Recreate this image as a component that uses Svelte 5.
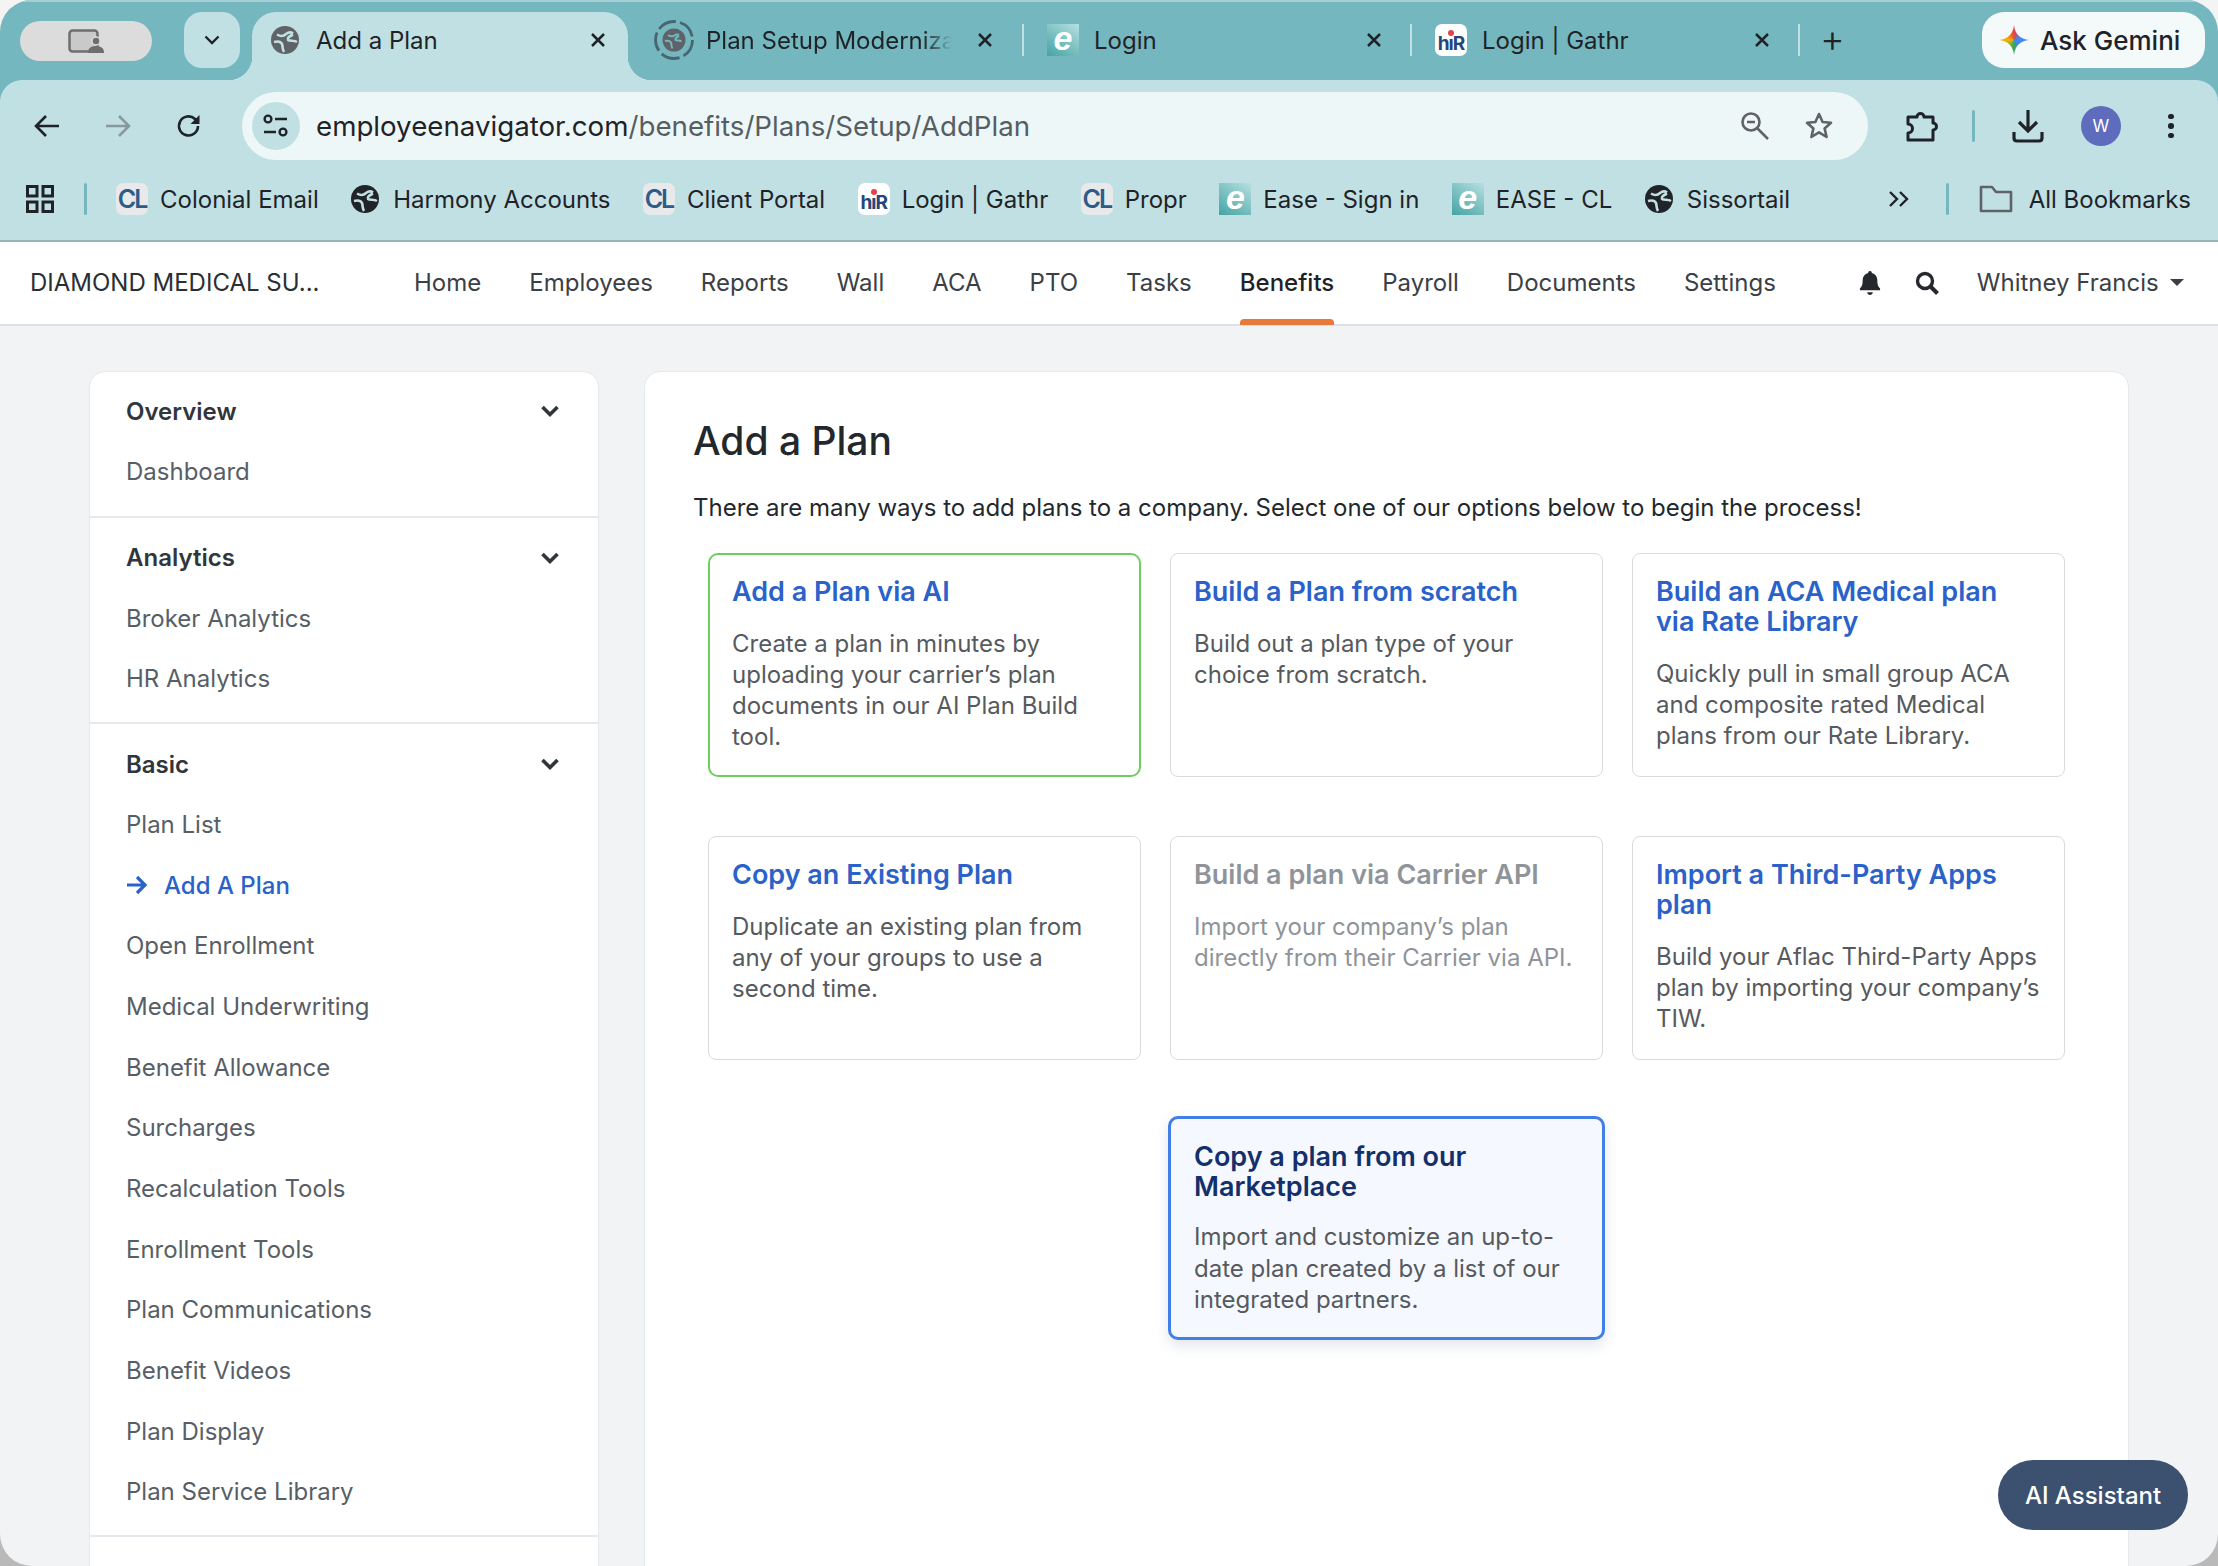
<script>
  let tabs = [
    { title: 'Plan Setup Moderniza', icon: 'spin', fade: true },
    { title: 'Login', icon: 'e' },
    { title: 'Login | Gathr', icon: 'hr' }
  ];

  let bookmarks = [
    { title: 'Colonial Email', icon: 'cl' },
    { title: 'Harmony Accounts', icon: 'globe' },
    { title: 'Client Portal', icon: 'cl' },
    { title: 'Login | Gathr', icon: 'hr' },
    { title: 'Propr', icon: 'cl' },
    { title: 'Ease - Sign in', icon: 'e' },
    { title: 'EASE - CL', icon: 'e' },
    { title: 'Sissortail', icon: 'globe' }
  ];

  let navItems = ['Home', 'Employees', 'Reports', 'Wall', 'ACA', 'PTO', 'Tasks', 'Benefits', 'Payroll', 'Documents', 'Settings'];

  let sideGroups = [
    { title: 'Overview', items: ['Dashboard'] },
    { title: 'Analytics', items: ['Broker Analytics', 'HR Analytics'] },
    {
      title: 'Basic',
      items: ['Plan List', 'Add A Plan', 'Open Enrollment', 'Medical Underwriting', 'Benefit Allowance', 'Surcharges', 'Recalculation Tools', 'Enrollment Tools', 'Plan Communications', 'Benefit Videos', 'Plan Display', 'Plan Service Library']
    }
  ];

  let cards = [
    { title: 'Add a Plan via AI', text: 'Create a plan in minutes by uploading your carrier’s plan documents in our AI Plan Build tool.', kind: 'ai' },
    { title: 'Build a Plan from scratch', text: 'Build out a plan type of your choice from scratch.' },
    { title: 'Build an ACA Medical plan via Rate Library', text: 'Quickly pull in small group ACA and composite rated Medical plans from our Rate Library.' },
    { title: 'Copy an Existing Plan', text: 'Duplicate an existing plan from any of your groups to use a second time.' },
    { title: 'Build a plan via Carrier API', text: 'Import your company’s plan directly from their Carrier via API.', kind: 'off' },
    { title: 'Import a Third-Party Apps plan', text: 'Build your Aflac Third-Party Apps plan by importing your company’s TIW.' },
    { title: 'Copy a plan from our Marketplace', text: 'Import and customize an up-to-date plan created by a list of our integrated partners.', kind: 'market' }
  ];
</script>

{#snippet globe(color, land)}
  <svg class="globe" viewBox="0 0 28 28">
    <circle cx="14" cy="14" r="14" fill={color} />
    <g fill="none" stroke={land} stroke-width="2.600">
      <path d="M6 8.500C10 11 13 10 15 8c2-1.500 5-2 7-.5" />
      <path d="M22 8.500c-4 2-6 3.500-5 5.500 2 1.500 6 0 9 2" />
      <path d="M3 16c4-1 7 0 8 2 1 3 0 5 2 8" />
    </g>
  </svg>
{/snippet}

{#snippet closeX()}
  <svg class="tab-x" viewBox="0 0 16 16" width="16" height="16"><path d="m2 2 12 12M14 2 2 14" fill="none" stroke="#1f2328" stroke-width="2.500" /></svg>
{/snippet}

{#snippet favicon(kind)}
  {#if kind === 'cl'}
    <span class="fav fav-cl">CL</span>
  {:else if kind === 'hr'}
    <span class="fav fav-hr">hıR<i></i></span>
  {:else if kind === 'e'}
    <span class="fav fav-e">e</span>
  {:else if kind === 'spin'}
    <svg class="spin" viewBox="0 0 40 40">
      <circle cx="20" cy="20" r="18.500" fill="none" stroke="#47666e" stroke-width="2.800" stroke-dasharray="19 4.200" />
      <circle cx="20" cy="20" r="11.500" fill="#5f6368" />
      <g fill="none" stroke="#74b7bf" stroke-width="2">
        <path d="M14 15c3 2 5 1.500 6.500.5 1.500-1 3-1.500 4.500-.5" />
        <path d="M25 16c-3 1.500-4 2.500-3.500 4 1.500 1 4 0 6 1.500" />
        <path d="M11 21c3-.7 5 0 6 1.500.7 2 0 4 1.500 6" />
      </g>
    </svg>
  {:else}
    {@render globe('#202428', '#c1e0e3')}
  {/if}
{/snippet}

<div class="window">
  <header class="chrome">
    <div class="tabstrip">
      <div class="profile-pill">
        <svg viewBox="0 0 36 24" width="36" height="24">
          <rect x="1.500" y="1.500" width="28" height="21" rx="3" fill="#c9c9c9" stroke="#6e6e6e" stroke-width="2.500" />
          <circle cx="28" cy="12" r="4" fill="#6e6e6e" stroke="#dcdcdc" stroke-width="1.500" />
          <path d="M20 24c0-5 3-7 8-7s8 2 8 7z" fill="#6e6e6e" />
        </svg>
      </div>
      <button class="tab-search" aria-label="Search tabs">
        <svg viewBox="0 0 16 10" width="16" height="10"><path d="M1.500 1.500 8 8l6.500-6.500" fill="none" stroke="#1f2328" stroke-width="2.400" /></svg>
      </button>
      <div class="tab active">
        {@render globe('#5f6368', '#c1e0e3')}
        <span class="tab-title">Add a Plan</span>
        {@render closeX()}
      </div>
      {#each tabs as tab}
        <div class="tab" class:spinning={tab.icon === 'spin'}>
          {@render favicon(tab.icon)}
          <span class="tab-title" class:fade={tab.fade}>{tab.title}</span>
          {@render closeX()}
        </div>
      {/each}
      <span class="new-tab">+</span>
      <div class="gemini">
        <i class="sparkle"></i>
        <span>Ask Gemini</span>
      </div>
    </div>

    <div class="toolbar">
      <div class="nav-buttons">
        <svg viewBox="0 0 26 24" width="26" height="24"><path d="M25 12H3M12 2 2 12l10 10" fill="none" stroke="#1f2328" stroke-width="2.600" /></svg>
        <svg viewBox="0 0 26 24" width="26" height="24"><path d="M1 12h22M14 2l10 10-10 10" fill="none" stroke="#88989c" stroke-width="2.600" /></svg>
        <svg viewBox="0 0 26 26" width="26" height="26"><path d="M22 13a9.500 9.500 0 1 1-3-7l3 3" fill="none" stroke="#1f2328" stroke-width="2.600" /><path d="M23.500 2v9h-9z" fill="#1f2328" /></svg>
      </div>
      <div class="omnibox">
        <span class="site-info">
          <svg viewBox="0 0 26 24" width="26" height="24" fill="none" stroke="#1f2328" stroke-width="2.400">
            <circle cx="5" cy="5" r="3.400" /><path d="M12 5h12M1 18h12" /><circle cx="20" cy="18" r="3.400" />
          </svg>
        </span>
        <span class="url">employeenavigator.com<span class="url-path">/benefits/Plans/Setup/AddPlan</span></span>
        <span class="omni-icons">
          <svg viewBox="0 0 30 30" width="30" height="30" fill="none" stroke="#5f6368" stroke-width="2.600">
            <circle cx="11" cy="11" r="8.500" /><path d="M7 11h8M17.500 17.500 28 28" />
          </svg>
          <svg viewBox="0 0 30 30" width="30" height="30"><path d="m15 3 3.600 8 8.400.8-6.400 5.600 2 8.600-7.600-4.600L7.400 26l2-8.600L3 11.800l8.400-.8z" fill="none" stroke="#5f6368" stroke-width="2.600" stroke-linejoin="round" /></svg>
        </span>
      </div>
      <div class="tool-icons">
        <svg viewBox="0 0 34 34" width="34" height="34"><path d="M4 8h9a3.500 3.500 0 0 1 7 0h9v6a3.500 3.500 0 0 1 0 7v10H4v-7a4.500 4.500 0 0 0 0-9z" fill="none" stroke="#1f2328" stroke-width="3" stroke-linejoin="round" /></svg>
        <i class="bar"></i>
        <svg viewBox="0 0 34 34" width="34" height="34"><path d="M17 1v21M8 13l9 9 9-9" fill="none" stroke="#1f2328" stroke-width="3.200" /><path d="M3 23v6q0 3 3 3h22q3 0 3-3v-6" fill="none" stroke="#1f2328" stroke-width="3.200" /></svg>
        <span class="avatar">W</span>
        <span class="dots"><i></i><i></i><i></i></span>
      </div>
    </div>

    <div class="bookmarks">
      <svg class="apps" viewBox="0 0 28 28" width="28" height="28" fill="none" stroke="#1f2328" stroke-width="3">
        <rect x="1.500" y="1.500" width="9.500" height="9.500" /><rect x="17" y="1.500" width="9.500" height="9.500" />
        <rect x="1.500" y="17" width="9.500" height="9.500" /><rect x="17" y="17" width="9.500" height="9.500" />
      </svg>
      <i class="bar bm-bar"></i>
      {#each bookmarks as bm}
        <span class="bookmark">{@render favicon(bm.icon)}<span>{bm.title}</span></span>
      {/each}
      <span class="more">
        <svg viewBox="0 0 22 18" width="22" height="18"><path d="m2 2 7 7-7 7M12 2l7 7-7 7" fill="none" stroke="#1f2328" stroke-width="2.400" /></svg>
      </span>
      <i class="bar"></i>
      <span class="bookmark all">
        <svg viewBox="0 0 34 30" width="34" height="30"><path d="M2 27V3h11l4 5h15v19z" fill="none" stroke="#5f6368" stroke-width="2.600" stroke-linejoin="round" /></svg>
        <span>All Bookmarks</span>
      </span>
    </div>
  </header>

  <nav class="topnav">
    <span class="company">DIAMOND MEDICAL SU...</span>
    <div class="nav-links">
      {#each navItems as item}
        <a href="#top" class:current={item === 'Benefits'}>{item}</a>
      {/each}
    </div>
    <div class="nav-right">
      <svg viewBox="0 0 24 26" width="22" height="24"><path d="M12 0c1.500 0 2 1 2 2 4 1 6 4 6 8 0 5 1 7 3 9v2H1v-2c2-2 3-4 3-9 0-4 2-7 6-8 0-1 .5-2 2-2zM9 23h6c0 4-6 4-6 0z" fill="#25292e" /></svg>
      <svg viewBox="0 0 24 24" width="24" height="24"><circle cx="10" cy="10" r="7.500" fill="none" stroke="#25292e" stroke-width="3.400" /><path d="m15.500 15.500 7 7" stroke="#25292e" stroke-width="4" /></svg>
      <span class="user">Whitney Francis</span>
      <i class="caret"></i>
    </div>
  </nav>

  <div class="page">
    <aside class="sidebar">
      {#each sideGroups as group}
        <section class="side-group">
          <div class="side-head">
            <span>{group.title}</span>
            <svg viewBox="0 0 20 14" width="20" height="14"><path d="M2.500 3 10 10.500 17.500 3" fill="none" stroke="#30363b" stroke-width="3.600" /></svg>
          </div>
          {#each group.items as item}
            <div class="side-item" class:selected={item === 'Add A Plan'}>
              {#if item === 'Add A Plan'}
                <svg viewBox="0 0 22 20" width="22" height="20"><path d="M1 10h18M11 2l8 8-8 8" fill="none" stroke="#2a62c9" stroke-width="3.200" /></svg>
              {/if}
              {item}
            </div>
          {/each}
        </section>
      {/each}
    </aside>

    <main class="content">
      <h1>Add a Plan</h1>
      <p class="lead">There are many ways to add plans to a company. Select one of our options below to begin the process!</p>
      <div class="card-grid">
        {#each cards as card}
          <div class="card {card.kind || ''}">
            <h3>{card.title}</h3>
            <p>{card.text}</p>
          </div>
        {/each}
      </div>
    </main>
  </div>

  <button class="assistant">AI Assistant</button>
</div>

<style>
  :global(body) {
    margin: 0;
    background: linear-gradient(#f4f4f4, #b9b9b9);
  }

  .window {
    position: relative;
    height: 1566px;
    overflow: hidden;
    border-radius: 32px;
    background: #f1f3f5;
    font-family: Inter, "Noto Sans", sans-serif;
    color: #1f2328;
  }

  .chrome {
    background: #74b7bf;
    border-top: 2px solid #a6cfd4;
  }

  .tabstrip {
    display: flex;
    align-items: flex-end;
    height: 78px;
    padding-left: 20px;
  }

  .profile-pill {
    display: flex;
    align-items: center;
    justify-content: center;
    width: 132px;
    height: 40px;
    margin-bottom: 19px;
    border-radius: 20px;
    background: #dcdcdc;
  }

  .tab-search {
    display: flex;
    align-items: center;
    justify-content: center;
    width: 56px;
    height: 56px;
    margin: 0 12px 12px 32px;
    padding: 0;
    border: none;
    border-radius: 18px;
    background: #c1e0e3;
  }

  .tab {
    position: relative;
    display: flex;
    align-items: center;
    gap: 15px;
    box-sizing: border-box;
    width: 388px;
    height: 68px;
    padding: 0 0 12px 23px;
    font-size: 24px;
  }

  .tab.spinning {
    gap: 12px;
    padding-left: 18px;
  }

  .tab:not(.active)::after {
    content: "";
    position: absolute;
    right: 0;
    top: 12px;
    bottom: 24px;
    width: 2px;
    background: #c1e0e3;
  }

  .tab.active {
    gap: 17px;
    width: 376px;
    margin-right: 8px;
    padding-left: 19px;
    border-radius: 24px 24px 0 0;
    background: #c1e0e3;
  }

  .tab.active::before,
  .tab.active::after {
    content: "";
    position: absolute;
    bottom: 0;
    width: 24px;
    height: 24px;
  }

  .tab.active::before {
    left: -24px;
    background: radial-gradient(circle at 0 0, transparent 24px, #c1e0e3 24.500px);
  }

  .tab.active::after {
    right: -24px;
    background: radial-gradient(circle at 100% 0, transparent 24px, #c1e0e3 24.500px);
  }

  .tab-title {
    flex: 1;
    overflow: hidden;
    white-space: nowrap;
  }

  .tab-title.fade {
    flex: none;
    width: 246px;
    margin-right: 13px;
    -webkit-mask-image: linear-gradient(to right, #000 88%, transparent);
    mask-image: linear-gradient(to right, #000 88%, transparent);
  }

  .tab-x {
    flex: none;
    margin-right: 30px;
  }

  .tab.active .tab-x {
    margin-right: 22px;
  }

  .new-tab {
    margin: 0 0 12px 20px;
    height: 56px;
    font-size: 38px;
    font-weight: 300;
    line-height: 52px;
  }

  .gemini {
    display: flex;
    align-items: center;
    gap: 11px;
    box-sizing: border-box;
    width: 223px;
    height: 56px;
    margin: 0 13px 12px auto;
    padding-left: 17px;
    border-radius: 22px;
    background: #f4f9fa;
    font-size: 26px;
    font-weight: 500;
  }

  .sparkle {
    flex: none;
    width: 30px;
    height: 30px;
    background: conic-gradient(#e8453c 0deg, #4285f4 70deg, #4285f4 130deg, #34a853 180deg, #f5b400 270deg, #e8453c 360deg);
    clip-path: path("M15 0C16 9 21 14 30 15 21 16 16 21 15 30 14 21 9 16 0 15 9 14 14 9 15 0Z");
  }

  .toolbar {
    display: flex;
    align-items: flex-end;
    height: 80px;
    border-radius: 22px 22px 0 0;
    background: #c1e0e3;
  }

  .nav-buttons {
    display: flex;
    align-items: center;
    gap: 45px;
    width: 242px;
    height: 68px;
    box-sizing: border-box;
    padding-left: 34px;
  }

  .omnibox {
    display: flex;
    align-items: center;
    box-sizing: border-box;
    width: 1626px;
    height: 68px;
    padding: 0 34px 0 10px;
    border-radius: 34px;
    background: #eef7f8;
  }

  .site-info {
    display: flex;
    align-items: center;
    justify-content: center;
    width: 48px;
    height: 48px;
    margin-right: 16px;
    border-radius: 50%;
    background: #c1e0e3;
  }

  .url {
    flex: 1;
    font-size: 27.700px;
  }

  .url-path {
    color: #555e63;
  }

  .omni-icons {
    display: flex;
    gap: 34px;
  }

  .tool-icons {
    display: flex;
    align-items: center;
    height: 68px;
    padding-left: 36px;
  }

  .bar {
    display: block;
    width: 3px;
    height: 32px;
    border-radius: 2px;
    background: #74b7bf;
  }

  .tool-icons .bar {
    margin: 0 36px 0 34px;
  }

  .avatar {
    display: flex;
    align-items: center;
    justify-content: center;
    width: 40px;
    height: 40px;
    margin-left: 36px;
    border-radius: 50%;
    background: #5f6bbd;
    color: #fff;
    font-size: 17px;
  }

  .dots {
    display: flex;
    flex-direction: column;
    gap: 4px;
    margin-left: 47px;
  }

  .dots i {
    width: 5.500px;
    height: 5.500px;
    border-radius: 50%;
    background: #1f2328;
  }

  .bookmarks {
    display: flex;
    align-items: center;
    height: 82px;
    padding: 0 0 2px 26px;
    background: #c1e0e3;
    border-bottom: 2px solid #93b4b8;
    box-sizing: border-box;
    font-size: 24px;
  }

  .bm-bar {
    margin: 0 29px 0 30px;
  }

  .bookmark {
    display: flex;
    align-items: center;
    gap: 12px;
    margin-right: 32.500px;
    white-space: nowrap;
  }

  .bookmark .globe {
    margin-right: 2px;
  }

  .more {
    display: flex;
    margin: 0 36px 0 65px;
  }

  .bookmark.all {
    margin: 0 0 0 30px;
    gap: 16px;
  }

  .fav {
    display: flex;
    align-items: center;
    justify-content: center;
    flex: none;
    position: relative;
    box-sizing: border-box;
    width: 32px;
    height: 32px;
    border-radius: 7px;
  }

  .fav-cl {
    background: #e8e9ea;
    color: #2f5b8a;
    font-size: 25px;
    font-weight: 600;
    letter-spacing: -2px;
  }

  .fav-hr {
    background: #fff;
    color: #23467c;
    font-size: 19px;
    font-weight: 700;
    letter-spacing: -1px;
    padding-top: 7px;
  }

  .fav-hr i {
    position: absolute;
    top: 6px;
    left: 13px;
    width: 6px;
    height: 6px;
    border-radius: 50%;
    background: #e0454b;
  }

  .fav-e {
    border-radius: 0;
    padding-bottom: 4px;
    background: linear-gradient(35deg, #45a3a3, #b6e0e1);
    color: #fff;
    font: italic 700 34px/28px "Liberation Sans", sans-serif;
  }

  .globe {
    flex: none;
    width: 28px;
    height: 28px;
  }

  .spin {
    flex: none;
    width: 40px;
    height: 40px;
  }

  .topnav {
    display: flex;
    align-items: center;
    height: 84px;
    padding: 0 0 1px 30px;
    background: #fff;
    border-bottom: 2px solid #dde1e6;
    font-size: 24px;
    color: #3a4046;
    box-sizing: border-box;
  }

  .company {
    width: 384px;
    flex: none;
    color: #2a2f34;
  }

  .nav-links {
    display: flex;
    gap: 48px;
    height: 100%;
  }

  .nav-links a {
    position: relative;
    display: flex;
    align-items: center;
    color: inherit;
    text-decoration: none;
  }

  .nav-links a.current {
    color: #1f2328;
    font-weight: 500;
  }

  .nav-links a.current::after {
    content: "";
    position: absolute;
    left: 0;
    right: 0;
    bottom: -2px;
    height: 6px;
    border-radius: 4px 4px 0 0;
    background: #e8793a;
  }

  .nav-right {
    display: flex;
    align-items: center;
    gap: 34px;
    margin-left: 83px;
  }

  .user {
    margin-left: 4px;
    margin-right: -23px;
  }

  .caret {
    width: 0;
    height: 0;
    border-left: 7px solid transparent;
    border-right: 7px solid transparent;
    border-top: 7px solid #3a4046;
  }

  .page {
    display: flex;
    gap: 45px;
    padding: 45px 90px 0 89px;
  }

  .sidebar {
    flex: none;
    width: 510px;
    height: 1300px;
    box-sizing: border-box;
    border: 1px solid #e5e8ec;
    border-radius: 16px 16px 0 0;
    background: #fff;
  }

  .side-group {
    padding: 10px 0 13px;
    border-bottom: 2px solid #e5e8ec;
  }

  .side-group:first-child {
    padding: 9px 0 14px;
  }

  .side-head {
    display: flex;
    align-items: center;
    justify-content: space-between;
    height: 60px;
    padding: 0 38px 0 36px;
    font-size: 24px;
    font-weight: 600;
    color: #30363b;
  }

  .side-item {
    display: flex;
    align-items: center;
    gap: 16px;
    height: 60.700px;
    padding-left: 36px;
    font-size: 24px;
    color: #575e66;
  }

  .side-item.selected {
    color: #2a62c9;
    font-weight: 500;
  }

  .content {
    flex: none;
    width: 1485px;
    height: 1300px;
    box-sizing: border-box;
    padding: 46px 48px 0;
    border: 1px solid #e5e8ec;
    border-radius: 16px 16px 0 0;
    background: #fff;
  }

  h1 {
    margin: 0;
    font-size: 39px;
    font-weight: 500;
    line-height: 46px;
    color: #22282c;
  }

  .lead {
    margin: 27px 0 0;
    font-size: 24px;
    line-height: 34px;
    color: #22282c;
  }

  .card-grid {
    display: grid;
    grid-template-columns: repeat(3, 433px);
    grid-auto-rows: 224px;
    column-gap: 29px;
    row-gap: 59px;
    margin: 28px 0 0 15px;
  }

  .card {
    box-sizing: border-box;
    padding: 23px 23px;
    border: 1.500px solid #d9dcdf;
    border-radius: 8px;
    background: #fff;
  }

  .card h3 {
    margin: 0;
    font-size: 27px;
    font-weight: 600;
    line-height: 30px;
    color: #2a62c9;
  }

  .card p {
    margin: 21px 0 0;
    font-size: 24px;
    line-height: 31px;
    color: #565a5e;
  }

  .card.ai {
    padding: 22px;
    border: 2px solid #6bd05a;
    border-radius: 10px;
  }

  .card.off h3,
  .card.off p {
    color: #8e9499;
  }

  .card.market {
    grid-column: 2;
    margin: -3px -2px 3px;
    border: 3px solid #3f7fe6;
    border-radius: 10px;
    background: #f5f8fe;
    box-shadow: 0 6px 14px rgba(60, 80, 120, 0.14);
  }

  .card.market h3 {
    color: #13306b;
  }

  .card.market p {
    margin-top: 19px;
    line-height: 31.500px;
  }

  .assistant {
    position: absolute;
    right: 30px;
    bottom: 36px;
    width: 190px;
    height: 70px;
    border: none;
    border-radius: 35px;
    background: #3c5070;
    color: #fff;
    font: 500 24px Inter, sans-serif;
  }
</style>
